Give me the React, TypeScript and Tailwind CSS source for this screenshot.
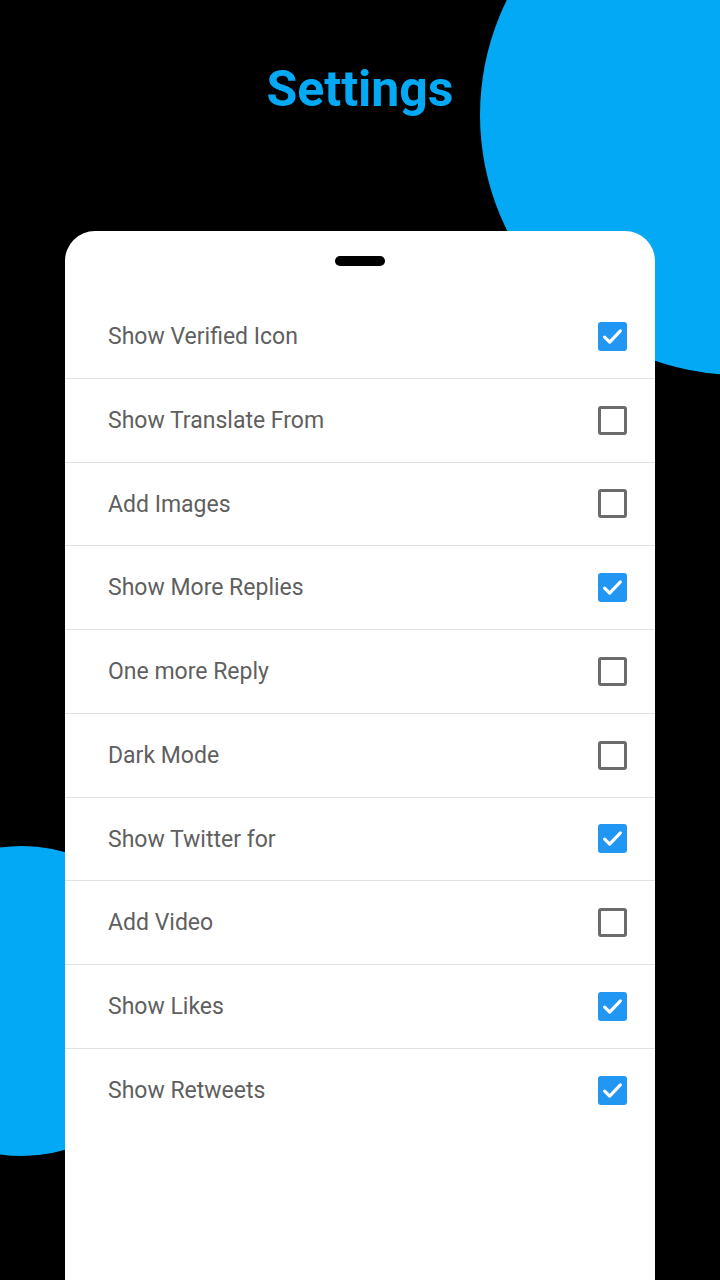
import React, { useState } from 'react';

interface Setting {
    label: string;
    checked: boolean;
}

const initialSettings: Setting[] = [
    { label: 'Show Verified Icon', checked: true },
    { label: 'Show Translate From', checked: false },
    { label: 'Add Images', checked: false },
    { label: 'Show More Replies', checked: true },
    { label: 'One more Reply', checked: false },
    { label: 'Dark Mode', checked: false },
    { label: 'Show Twitter for', checked: true },
    { label: 'Add Video', checked: false },
    { label: 'Show Likes', checked: true },
    { label: 'Show Retweets', checked: true },
];

const App: React.FC = () => {
    const [settings, setSettings] = useState<Setting[]>(initialSettings);

    const toggle = (i: number) => {
        setSettings(settings.map((s, idx) => (idx === i ? { ...s, checked: !s.checked } : s)));
    };

    return (
        <div className="relative w-[720px] h-[1280px] bg-black overflow-hidden font-['Roboto',sans-serif]">
            {/* Decorative circles */}
            <div className="absolute left-[480px] top-[-145px] w-[520px] h-[520px] rounded-full bg-[#03a9f4]" />
            <div className="absolute left-[-133px] top-[846px] w-[310px] h-[310px] rounded-full bg-[#03a9f4]" />

            <div className="relative flex flex-col items-center h-full">
                <h1 className="mt-[57px] text-[50px] leading-[64px] font-bold text-[#03a9f4]">Settings</h1>

                {/* Card */}
                <div className="mt-[110px] w-[590px] flex-1 bg-white rounded-t-[30px] flex flex-col">
                    <div className="flex justify-center pt-[25px] pb-[29px]">
                        <div className="w-[50px] h-[10px] rounded-full bg-black" />
                    </div>

                    {settings.map((s, i) => (
                        <div
                            key={s.label}
                            onClick={() => toggle(i)}
                            className={`h-[83.75px] flex items-center justify-between pl-[43px] pr-[28px] cursor-pointer ${i < settings.length - 1 ? 'border-b border-[#e0e0e0]' : ''}`}
                        >
                            <span className="text-[23px] text-[#5f5f5f] pt-[2px]">{s.label}</span>
                            {s.checked ? (
                                <div className="w-[29px] h-[29px] rounded-[3px] bg-[#2196f3] flex items-center justify-center">
                                    <svg className="w-[27px] h-[27px] text-white" fill="none" stroke="currentColor" viewBox="0 0 24 24">
                                        <path strokeLinecap="round" strokeLinejoin="round" strokeWidth={2.8} d="M5 12.5l4.5 4.5L19 7" />
                                    </svg>
                                </div>
                            ) : (
                                <div className="w-[29px] h-[29px] rounded-[3px] border-[3px] border-[#6b6b6b]" />
                            )}
                        </div>
                    ))}
                </div>
            </div>
        </div>
    );
};

export default App;
